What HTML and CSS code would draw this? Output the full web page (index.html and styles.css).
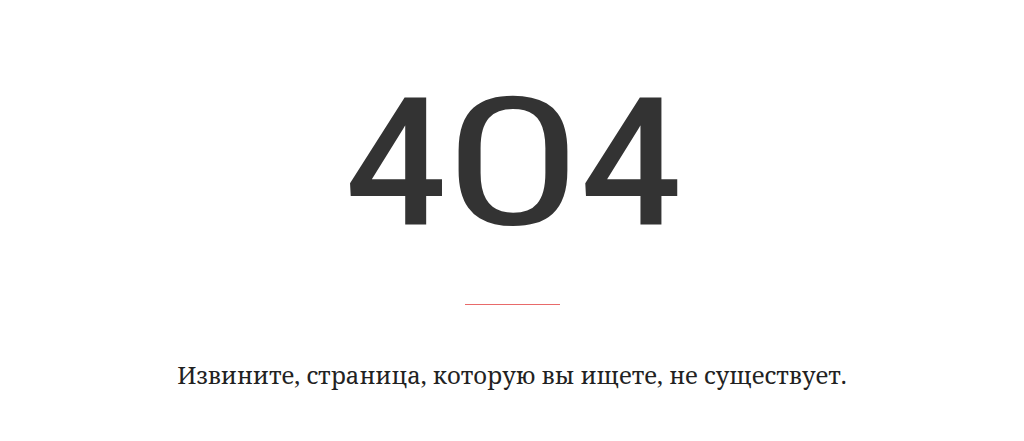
FILE: index.html
```html
<!DOCTYPE html>
<html lang="ru">
<head>
<meta charset="utf-8">
<title>404</title>
<link rel="stylesheet" href="styles.css">
</head>
<body>
<main class="notfound">
  <h1 class="code">4<span class="zero">0</span>4</h1>
  <div class="divider"></div>
  <p class="message">Извините, страница, которую вы ищете, не существует.</p>
</main>
</body>
</html>
```
FILE: styles.css
```css
html, body {
  margin: 0;
  padding: 0;
  background: #ffffff;
}
.notfound {
  display: flex;
  flex-direction: column;
  align-items: center;
  padding-top: 74px;
}
.code {
  margin: 0;
  font-family: Roboto, "Open Sans", sans-serif;
  font-weight: 500;
  font-size: 178px;
  line-height: 1;
  height: 178px;
  color: #333333;
  white-space: nowrap;
  padding-left: 3px;
}
.zero {
  display: inline-block;
  margin: 0 17px;
  font-weight: 400;
  transform: scaleX(1.36);
}
.divider {
  width: 95px;
  height: 1px;
  margin-top: 52px;
  background: #e86a6a;
}
.message {
  margin: 54px 0 0;
  font-family: "Noto Serif", "DejaVu Serif", serif;
  font-size: 23.8px;
  line-height: 1.4;
  color: #222222;
}
```
